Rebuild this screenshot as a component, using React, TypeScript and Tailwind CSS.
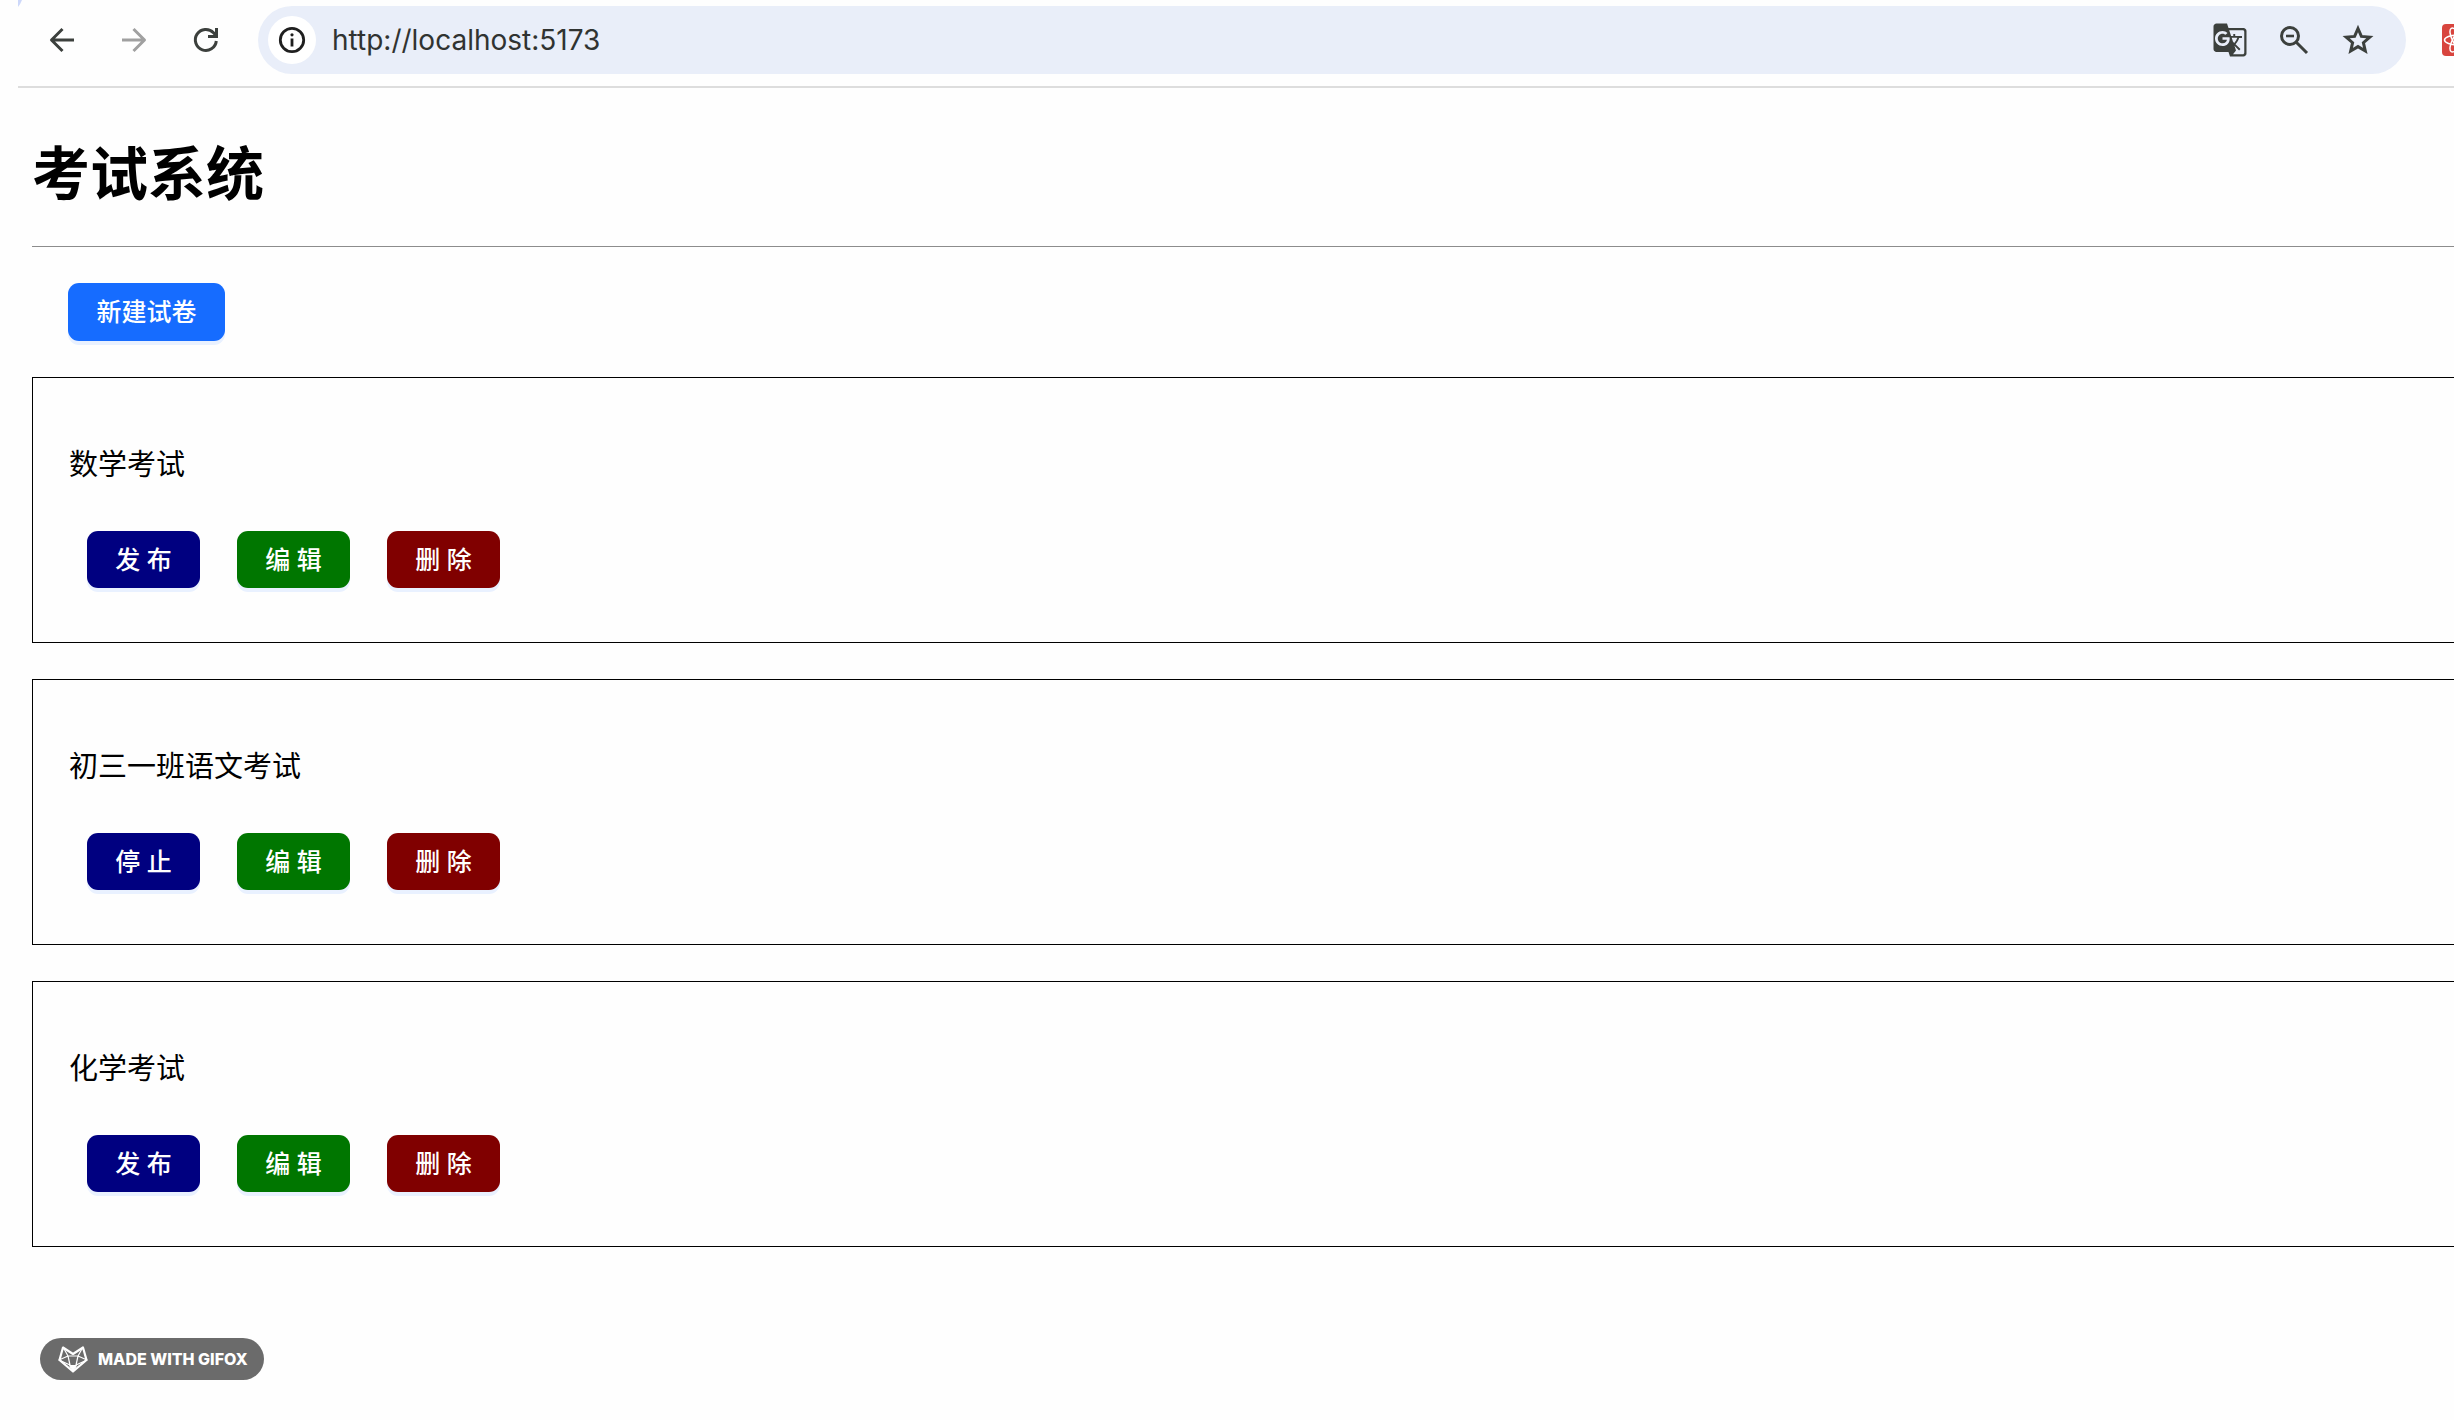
import { useState } from "react";
import { MdGTranslate } from "react-icons/md";

interface Exam {
	id: number;
	title: string;
	published: boolean;
}

const initialExams: Exam[] = [
	{ id: 1, title: "数学考试", published: false },
	{ id: 2, title: "初三一班语文考试", published: true },
	{ id: 3, title: "化学考试", published: false },
];

const buttonBase =
	"rounded-[11px] text-[25px] leading-8 font-medium text-white whitespace-nowrap cursor-pointer shadow-[0_4px_0_#e9f1ff]";
const examButton = `${buttonBase} h-[57px] w-[113px]`;

const BrowserBar = () => {
	const [url, setUrl] = useState("http://localhost:5173");

	return (
		<header className="relative ml-[18px] h-[88px] border-b-2 border-[#dddddd] flex items-start pt-1.5 overflow-hidden text-[#3c403d]">
			{/* Edge of the active tab */}
			<svg viewBox="0 0 4 8" className="absolute left-0 top-0 w-1 h-2" fill="#cdd8fa">
				<path d="M0 0 H4 Q2 5 0 7 Z" />
			</svg>
			<nav className="h-[68px] flex items-center gap-9 pl-[26px] pr-[34px]">
				<button aria-label="Back">
					<svg
						viewBox="0 0 36 36"
						className="size-9"
						fill="none"
						stroke="currentColor"
						strokeWidth="3"
						strokeLinejoin="round"
					>
						<path d="M30 18 H8 M18.5 7 L7.5 18 L18.5 29" />
					</svg>
				</button>
				<button aria-label="Forward" className="text-[#a0a0a0]">
					<svg
						viewBox="0 0 36 36"
						className="size-9"
						fill="none"
						stroke="currentColor"
						strokeWidth="3"
						strokeLinejoin="round"
					>
						<path d="M6 18 H28 M17.5 7 L28.5 18 L17.5 29" />
					</svg>
				</button>
				<button aria-label="Reload">
					<svg
						viewBox="0 0 36 36"
						className="size-9"
						fill="none"
						stroke="currentColor"
						strokeWidth="3"
					>
						<path d="M28.3 19 A10.5 10.5 0 1 1 25.5 10.7 L28 13.5" />
						<path d="M28.5 6 V14.5 H20" />
					</svg>
				</button>
			</nav>
			<div className="flex-1 min-w-0 h-[68px] rounded-full bg-[#e9eef9] flex items-center pl-2.5 pr-[30px]">
				<button
					aria-label="Site information"
					className="size-12 shrink-0 rounded-full bg-white text-[#1f1f1f] flex items-center justify-center"
				>
					<svg viewBox="0 0 32 32" className="size-8" fill="none" stroke="currentColor">
						<circle cx="16" cy="16" r="11.7" strokeWidth="2.8" />
						<path d="M16 14.5 V22.5" strokeWidth="2.8" />
						<circle cx="16" cy="10.8" r="1.6" fill="currentColor" stroke="none" />
					</svg>
				</button>
				<input
					aria-label="Address"
					value={url}
					onChange={(e) => setUrl(e.target.value)}
					className="flex-1 min-w-0 ml-4 bg-transparent outline-none text-[28px] text-[#303331]"
				/>
				<div className="flex items-center gap-7">
					<button aria-label="Translate">
						<MdGTranslate className="size-9" />
					</button>
					<button aria-label="Zoom">
						<svg
							viewBox="0 0 36 36"
							className="size-9"
							fill="none"
							stroke="currentColor"
							strokeWidth="3"
						>
							<circle cx="14" cy="14" r="8.5" />
							<path d="M20 20 L31 31" />
							<path d="M10 14 H18" strokeWidth="2.6" />
						</svg>
					</button>
					<button aria-label="Bookmark">
						<svg
							viewBox="0 0 36 36"
							className="size-9"
							fill="none"
							stroke="currentColor"
							strokeWidth="3"
						>
							<path d="M18 6.5 L21.4 14.4 L29.8 15.1 L23.4 20.7 L25.3 29 L18 24.6 L10.7 29 L12.6 20.7 L6.2 15.1 L14.6 14.4 Z" />
						</svg>
					</button>
				</div>
			</div>
			<button
				aria-label="React extension"
				className="self-start mt-[18px] ml-9 -mr-5 size-8 shrink-0 rounded-sm bg-[#d8453e]"
			>
				<svg viewBox="0 0 32 32" className="size-8" fill="none" stroke="#fff" strokeWidth="1.5">
					<ellipse cx="16" cy="16" rx="13.5" ry="5" />
					<ellipse cx="16" cy="16" rx="13.5" ry="5" transform="rotate(60 16 16)" />
					<ellipse cx="16" cy="16" rx="13.5" ry="5" transform="rotate(120 16 16)" />
					<circle cx="16" cy="16" r="2.5" fill="#fff" />
				</svg>
			</button>
		</header>
	);
};

const App = () => {
	const [exams, setExams] = useState<Exam[]>(initialExams);

	const handleCreate = () => {
		setExams([...exams, { id: Date.now(), title: "新试卷", published: false }]);
	};

	const handlePublish = (id: number) => {
		setExams(
			exams.map((exam) =>
				exam.id === id ? { ...exam, published: !exam.published } : exam
			)
		);
	};

	const handleDelete = (id: number) => {
		setExams(exams.filter((exam) => exam.id !== id));
	};

	return (
		<div className="relative min-h-screen overflow-x-hidden bg-[#fefefe] text-black font-[Inter,'Noto_Sans_CJK_SC',sans-serif]">
			<BrowserBar />

			<main className="pl-8">
				<h1 className="pt-[46px] pb-8 text-[58px] leading-[80px] font-bold">
					考试系统
				</h1>
				<hr className="border-[#8c8c8c]" />
				<div className="p-9">
					<button
						className={`${buttonBase} h-[58px] min-w-[157px] px-7 bg-[#166cff]`}
						onClick={handleCreate}
					>
						新建试卷
					</button>
				</div>

				{/* Exam list */}
				<div className="-mr-1 space-y-9">
					{exams.map((exam) => (
						<section key={exam.id} className="border border-black p-9">
							<p className="mt-[31px] mb-[29px] text-[29px] leading-10">{exam.title}</p>
							<div className="px-[18px] pt-[17px] pb-[18px] flex gap-[37px]">
								<button
									className={`${examButton} bg-[#000080]`}
									onClick={() => handlePublish(exam.id)}
								>
									{exam.published ? "停 止" : "发 布"}
								</button>
								<button className={`${examButton} bg-[#007600]`}>编 辑</button>
								<button
									className={`${examButton} bg-[#800000]`}
									onClick={() => handleDelete(exam.id)}
								>
									删 除
								</button>
							</div>
						</section>
					))}
				</div>
			</main>

			{/* Recorder badge */}
			<div className="absolute left-10 bottom-10 h-[42px] pl-[18px] pr-4 rounded-full bg-[#6b6b6b] text-white flex items-center gap-2.5">
				<svg
					viewBox="0 0 30 27"
					className="w-[30px] h-[27px]"
					fill="none"
					stroke="currentColor"
					strokeLinejoin="round"
				>
					<path d="M5 1.5 L15 8 L25 1.5 L28.5 14 L15 25.5 L1.5 14 Z" strokeWidth="2.2" />
					<path
						d="M5 1 L10 10 L1 14 L12 19 L10 10 H20 L18 19 L29 14 L20 10 L25 1"
						strokeWidth="1.2"
					/>
					<path d="M11.5 19.5 H18.5 L15 26 Z" fill="currentColor" />
				</svg>
				<span className="text-base leading-5 font-extrabold">MADE WITH GIFOX</span>
			</div>
		</div>
	);
};

export default App;
